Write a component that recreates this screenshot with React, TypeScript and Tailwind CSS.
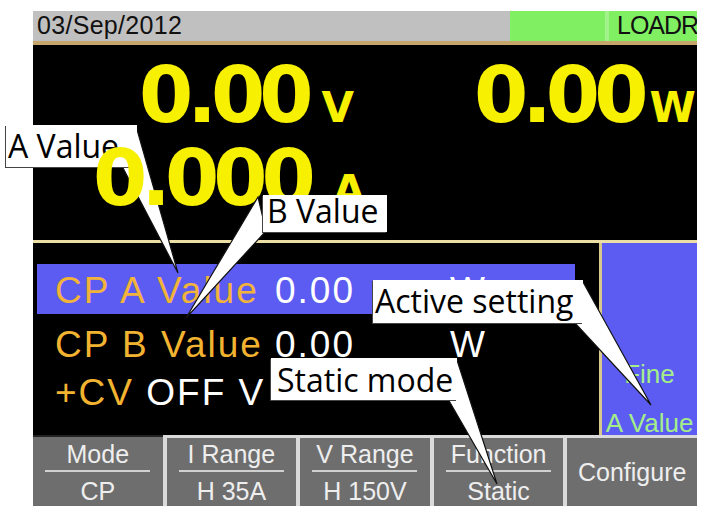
const keys = [
  { top: "Mode", bottom: "CP" },
  { top: "I Range", bottom: "H 35A" },
  { top: "V Range", bottom: "H 150V" },
  { top: "Function", bottom: "Static" },
];

const callouts = [
  { text: "B Value", box: "left-[263px] top-[195px] w-[124px] h-[37px] pl-[4px] pt-0", wedge: "258,197 266,231 186,318" },
  { text: "Active setting", box: "left-[373px] top-[280px] w-[210px] h-[43px] pl-[2px] pt-[5px]", wedge: "565,282 583,282 651,405 574,322" },
  { text: "Static mode", box: "left-[271px] top-[358px] w-[186px] h-[42px] pl-[6px] pt-[6px]", wedge: "440,360 457,360 497,484 448,399" },
];

export default function App() {
  return (
    <div className="relative w-[709px] h-[506px] overflow-hidden bg-white pt-[11px]">
      <div className="ml-[33px] w-[664px] flex flex-col">
        {/* status bar */}
        <div className="h-[30px] flex bg-[#c0c0c0] font-['Liberation_Sans',sans-serif] text-[25px] leading-none text-[#111]">
          <div className="flex-1 pl-[4px] pt-[2px] tracking-[0.3px]">03/Sep/2012</div>
          <div className="w-[95px] bg-[#80f062]" />
          <div className="w-[4px] bg-[#a4f28c]" />
          <div className="w-[88px] bg-[#80f062] pl-[8px] pt-[2px] tracking-[-1px] overflow-hidden whitespace-nowrap">LOADR</div>
        </div>
        <div className="h-[4px] bg-[#c6a66a]" />

        {/* measurement */}
        <div className="h-[195px] bg-black font-['DejaVu_Sans',sans-serif] font-bold text-[#f7f000] leading-none">
          <div className="relative z-10 mt-[11px] pl-[106px] flex items-baseline">
            <span className="text-[78px] tracking-[-6px]">0.00</span>
            <span className="ml-[14px] text-[42px]">V</span>
            <span className="ml-[120px] text-[78px] tracking-[-6px]">0.00</span>
            <span className="ml-[7px] text-[42px]">W</span>
          </div>
          <div className="relative z-10 mt-[5px] pl-[60px] flex items-baseline">
            <span className="text-[78px] tracking-[-6px]">0.000</span>
            <span className="ml-[23px] text-[42px]">A</span>
          </div>
        </div>
        <div className="h-[3px] bg-[#ebdfa6]" />

        {/* settings */}
        <div className="h-[192px] flex font-['Liberation_Sans',sans-serif] leading-none">
          <div className="w-[566px] bg-black pt-[21px] text-[37px] tracking-[2px]">
            <div className="ml-[4px] w-[538px] h-[50px] bg-[#5c5cf2] pl-[18px] pt-[8px] grid grid-cols-[220px_175px_auto]">
              <span className="text-[#f2b33a]">CP A Value</span>
              <span className="text-white">0.00</span>
              <span className="text-white">W</span>
            </div>
            <div className="mt-[12px] pl-[22px] grid grid-cols-[220px_175px_auto]">
              <span className="text-[#f2b330]">CP B Value</span>
              <span className="text-white">0.00</span>
              <span className="text-white">W</span>
            </div>
            <div className="mt-[11px] pl-[22px]">
              <span className="text-[#f2b330]">+CV</span> <span className="text-white">OFF V</span>
            </div>
          </div>
          <div className="w-[3px] bg-[#d8c88c]" />
          <div className="flex-1 bg-[#5c5cf2] flex flex-col items-center pt-[118px] text-[26px] text-[#a4ee8a] whitespace-nowrap">
            <span>Fine</span>
            <span className="mt-[23px]">A Value</span>
          </div>
        </div>

        {/* soft keys */}
        <div className="h-[71px] grid grid-cols-5 gap-x-[4px] bg-[#dadada] font-['Liberation_Sans',sans-serif] text-[25px] leading-none text-[#eeeeee]">
          {keys.map((k, i) => (
            <div
              key={k.top}
              className={
                i === 0
                  ? "bg-[#6e6e6e] border-t-[2px] border-[#222] pt-[5px] flex flex-col items-center"
                  : "mt-[3px] bg-[#6e6e6e] pt-[4px] flex flex-col items-center"
              }
            >
              <span>{k.top}</span>
              <div className="mt-[3px] h-[2px] w-[105px] bg-[#d0d0d0]" />
              <span className="mt-[7px]">{k.bottom}</span>
            </div>
          ))}
          <div className="mt-[3px] bg-[#6e6e6e] pt-[22px] flex justify-center">Configure</div>
        </div>
      </div>

      {/* A Value callout sits under the readings */}
      <svg className="absolute inset-0 z-[5] pointer-events-none" width="709" height="506">
        <polygon points="122,166 136,126 178,273" fill="#fff" stroke="#111" strokeWidth="1.2" />
      </svg>
      <div className="absolute z-[5] left-[6px] top-[125px] w-[131px] h-[42px] pl-[2px] pt-[5px] bg-white shadow-[-1px_1px_0_#444] font-['Open_Sans',sans-serif] text-[32px] leading-none text-black whitespace-nowrap">
        A Value
      </div>

      <svg className="absolute inset-0 z-20 pointer-events-none" width="709" height="506">
        {callouts.map((c) => (
          <polygon key={c.text} points={c.wedge} fill="#fff" stroke="#111" strokeWidth="1.2" />
        ))}
      </svg>
      {callouts.map((c) => (
        <div
          key={c.text}
          className={`absolute z-20 ${c.box} bg-white shadow-[-1px_1px_0_#444] font-['Open_Sans',sans-serif] text-[32px] leading-none text-black whitespace-nowrap`}
        >
          {c.text}
        </div>
      ))}
    </div>
  );
}
